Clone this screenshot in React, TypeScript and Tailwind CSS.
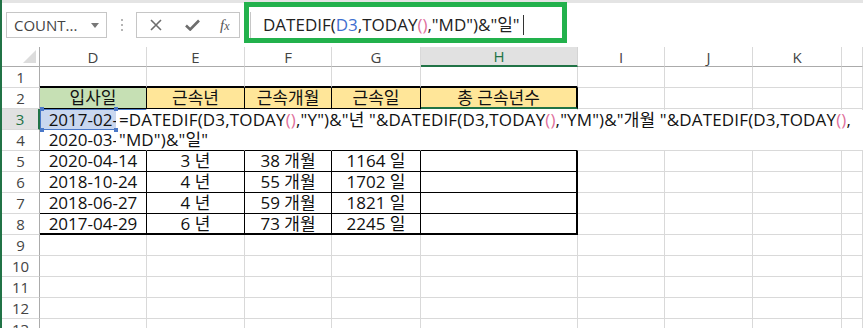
import type { ReactNode } from 'react';

const COLS = ['D', 'E', 'F', 'G', 'H', 'I', 'J', 'K', ''];

type Cell = { text?: ReactNode; cls?: string };

const Paren = () => <span className="text-[#e0709c]">()</span>;

// row 2 header labels
const heads = ['입사일', '근속년', '근속개월', '근속일', '총 근속년수'];

const data = [
  ['2020-04-14', '3 년', '38 개월', '1164 일'],
  ['2018-10-24', '4 년', '55 개월', '1702 일'],
  ['2018-06-27', '4 년', '59 개월', '1821 일'],
  ['2017-04-29', '6 년', '73 개월', '2245 일'],
];

function rowCells(r: number): Cell[] {
  const cells: Cell[] = COLS.map(() => ({ cls: 'border-r border-b border-[#d9d9d9]' }));
  if (r === 1) {
    for (let c = 0; c < 5; c++) cells[c] = { cls: 'border-r border-[#d9d9d9] border-b-2 border-b-black' };
  }
  if (r === 2) {
    for (let c = 0; c < 5; c++) {
      cells[c] = {
        text: heads[c],
        cls:
          (c === 0 ? 'bg-[#c6e0b4] ' : 'bg-[#ffe699] ') +
          (c === 4 ? 'border-r-2 border-r-black border-b-2 border-b-[#217346]' : 'border-r border-b border-black'),
      };
    }
  }
  if (r === 3) {
    cells[0] = {
      text: (
        <div className="flex h-full w-full items-center justify-center border border-[#4a78c8] bg-[#c9d7ef]">
          2017-02-14
        </div>
      ),
      cls: 'border-r border-[#d9d9d9]',
    };
  }
  if (r === 4) {
    for (let c = 0; c < 5; c++) cells[c] = { cls: 'border-r border-[#d9d9d9] border-b border-b-black' };
    cells[0] = { text: '2020-03-15', cls: 'border-r border-b border-b-black border-r-[#d9d9d9]' };
  }
  if (r >= 5 && r <= 8) {
    const row = data[r - 5];
    for (let c = 0; c < 5; c++) {
      const bottom = r === 8 ? 'border-b-2' : 'border-b';
      const right = c === 4 ? 'border-r-2' : 'border-r';
      cells[c] = { text: row[c], cls: `${bottom} ${right} border-black` };
    }
  }
  return cells;
}

function FormulaBar() {
  return (
    <div className="relative flex h-[47px] items-center border-t-[3px] border-t-[#e4e4e4]">
      {/* name box */}
      <div className="ml-[4px] flex h-[26px] w-[101px] items-center justify-between border border-[#c6c6c6] pl-[7px] pr-[7px] text-[15px] text-[#444]">
        <span>COUNT...</span>
        <svg width="8" height="5" viewBox="0 0 8 5">
          <path d="M0 0h8L4 5z" fill="#777" />
        </svg>
      </div>
      <div className="ml-[14px] flex flex-col gap-[3px]">
        <div className="h-[2px] w-[2px] bg-[#b5b5b5]" />
        <div className="h-[2px] w-[2px] bg-[#b5b5b5]" />
        <div className="h-[2px] w-[2px] bg-[#b5b5b5]" />
      </div>
      {/* cancel / enter / fx */}
      <div className="ml-[13px] flex h-[26px] w-[104px] items-center border border-[#c6c6c6]">
        <svg className="ml-[13px]" width="12" height="12" viewBox="0 0 12 12">
          <path d="M1 1l10 10M11 1L1 11" stroke="#6d6d6d" strokeWidth="1.6" />
        </svg>
        <svg className="ml-[23px]" width="15" height="12" viewBox="0 0 15 12">
          <path d="M1 6.5l4.2 4L14 1.5" stroke="#6d6d6d" strokeWidth="2.6" fill="none" />
        </svg>
        <span className="ml-[20px] font-['Liberation_Serif',serif] text-[15px] italic text-[#555]">
          f<span className="text-[12px]">x</span>
        </span>
      </div>
      {/* formula input */}
      <div className="ml-[10px] flex h-[26px] flex-1 items-center border-l border-[#c6c6c6] pl-[12px] text-[17px] leading-[20px] text-[#222]">
        <span>
          DATEDIF(<span className="text-[#3f6fd0]">D3</span>,TODAY<Paren />,"MD")&amp;"일"
        </span>
        <div className="ml-[3px] h-[20px] w-px bg-[#333]" />
      </div>
      {/* green annotation box */}
      <div className="absolute left-[242px] top-[-1px] h-[41px] w-[323px] border-[5px] border-[#22b14c]" />
    </div>
  );
}

export default function App() {
  const rows = Array.from({ length: 13 }, (_, i) => i + 1);
  return (
    <div className="relative h-[328px] w-[863px] overflow-hidden border-l-2 border-[#217346] bg-white font-['Open_Sans','Noto_Sans_CJK_KR',sans-serif] text-[#111]">
      <FormulaBar />

      <div className="grid grid-cols-[38px_107px_98px_87px_89px_157px_87px_88px_89px_1fr] grid-rows-[20px_repeat(13,21px)]">
        {/* column header row */}
        <div className="relative border-r border-b border-[#ababab]">
          <svg className="absolute bottom-[3px] right-[3px]" width="13" height="13" viewBox="0 0 13 13">
            <path d="M13 0v13H0z" fill="#dcdcdc" />
          </svg>
        </div>
        {COLS.map((c, i) => (
          <div
            key={c + i}
            className={
              'flex items-center justify-center text-[15px] leading-[18px] ' +
              (c === 'H'
                ? 'border-r border-r-[#d4d4d4] border-b-2 border-b-[#217346] bg-[#e1e1e1] text-[#217346]'
                : 'border-r border-b border-r-[#d9d9d9] border-b-[#ababab] text-[#444]')
            }
          >
            {c}
          </div>
        ))}

        {rows.map((r) => (
          <Row key={r} r={r} />
        ))}
      </div>

      {/* in-cell editor overlay for H3 */}
      <div className="absolute left-[114px] right-0 top-[110px] h-[40px] bg-white pl-[3px] text-[17px] leading-[20px] tracking-[0.15px] whitespace-nowrap text-[#111]">
        <div>
          =DATEDIF(D3,TODAY<Paren />,"Y")&amp;"년 "&amp;DATEDIF(D3,TODAY<Paren />,"YM")&amp;"개월 "&amp;DATEDIF(D3,TODAY<Paren />,
        </div>
        <div>"MD")&amp;"일"</div>
      </div>
      {/* reference handles on D3 */}
      <div className="absolute left-[38px] top-[107px] h-[4px] w-[4px] bg-[#4a78c8]" />
      <div className="absolute left-[112px] top-[107px] h-[4px] w-[4px] bg-[#4a78c8]" />
      <div className="absolute left-[38px] top-[128px] h-[4px] w-[4px] bg-[#4a78c8]" />
      <div className="absolute left-[112px] top-[128px] h-[4px] w-[4px] bg-[#4a78c8]" />
    </div>
  );
}

function Row({ r }: { r: number }) {
  const cells = rowCells(r);
  const active = r === 3;
  return (
    <>
      <div
        className={
          'flex items-center justify-center text-[15px] leading-[18px] border-b border-b-[#d9d9d9] ' +
          (active
            ? 'border-r-2 border-r-[#217346] bg-[#e1e1e1] text-[#217346]'
            : 'border-r border-r-[#ababab] text-[#444]')
        }
      >
        {r}
      </div>
      {cells.map((c, i) => (
        <div key={i} className={'flex items-center justify-center overflow-hidden whitespace-nowrap text-[17px] leading-[20px] ' + (c.cls ?? '')}>
          {c.text}
        </div>
      ))}
    </>
  );
}
